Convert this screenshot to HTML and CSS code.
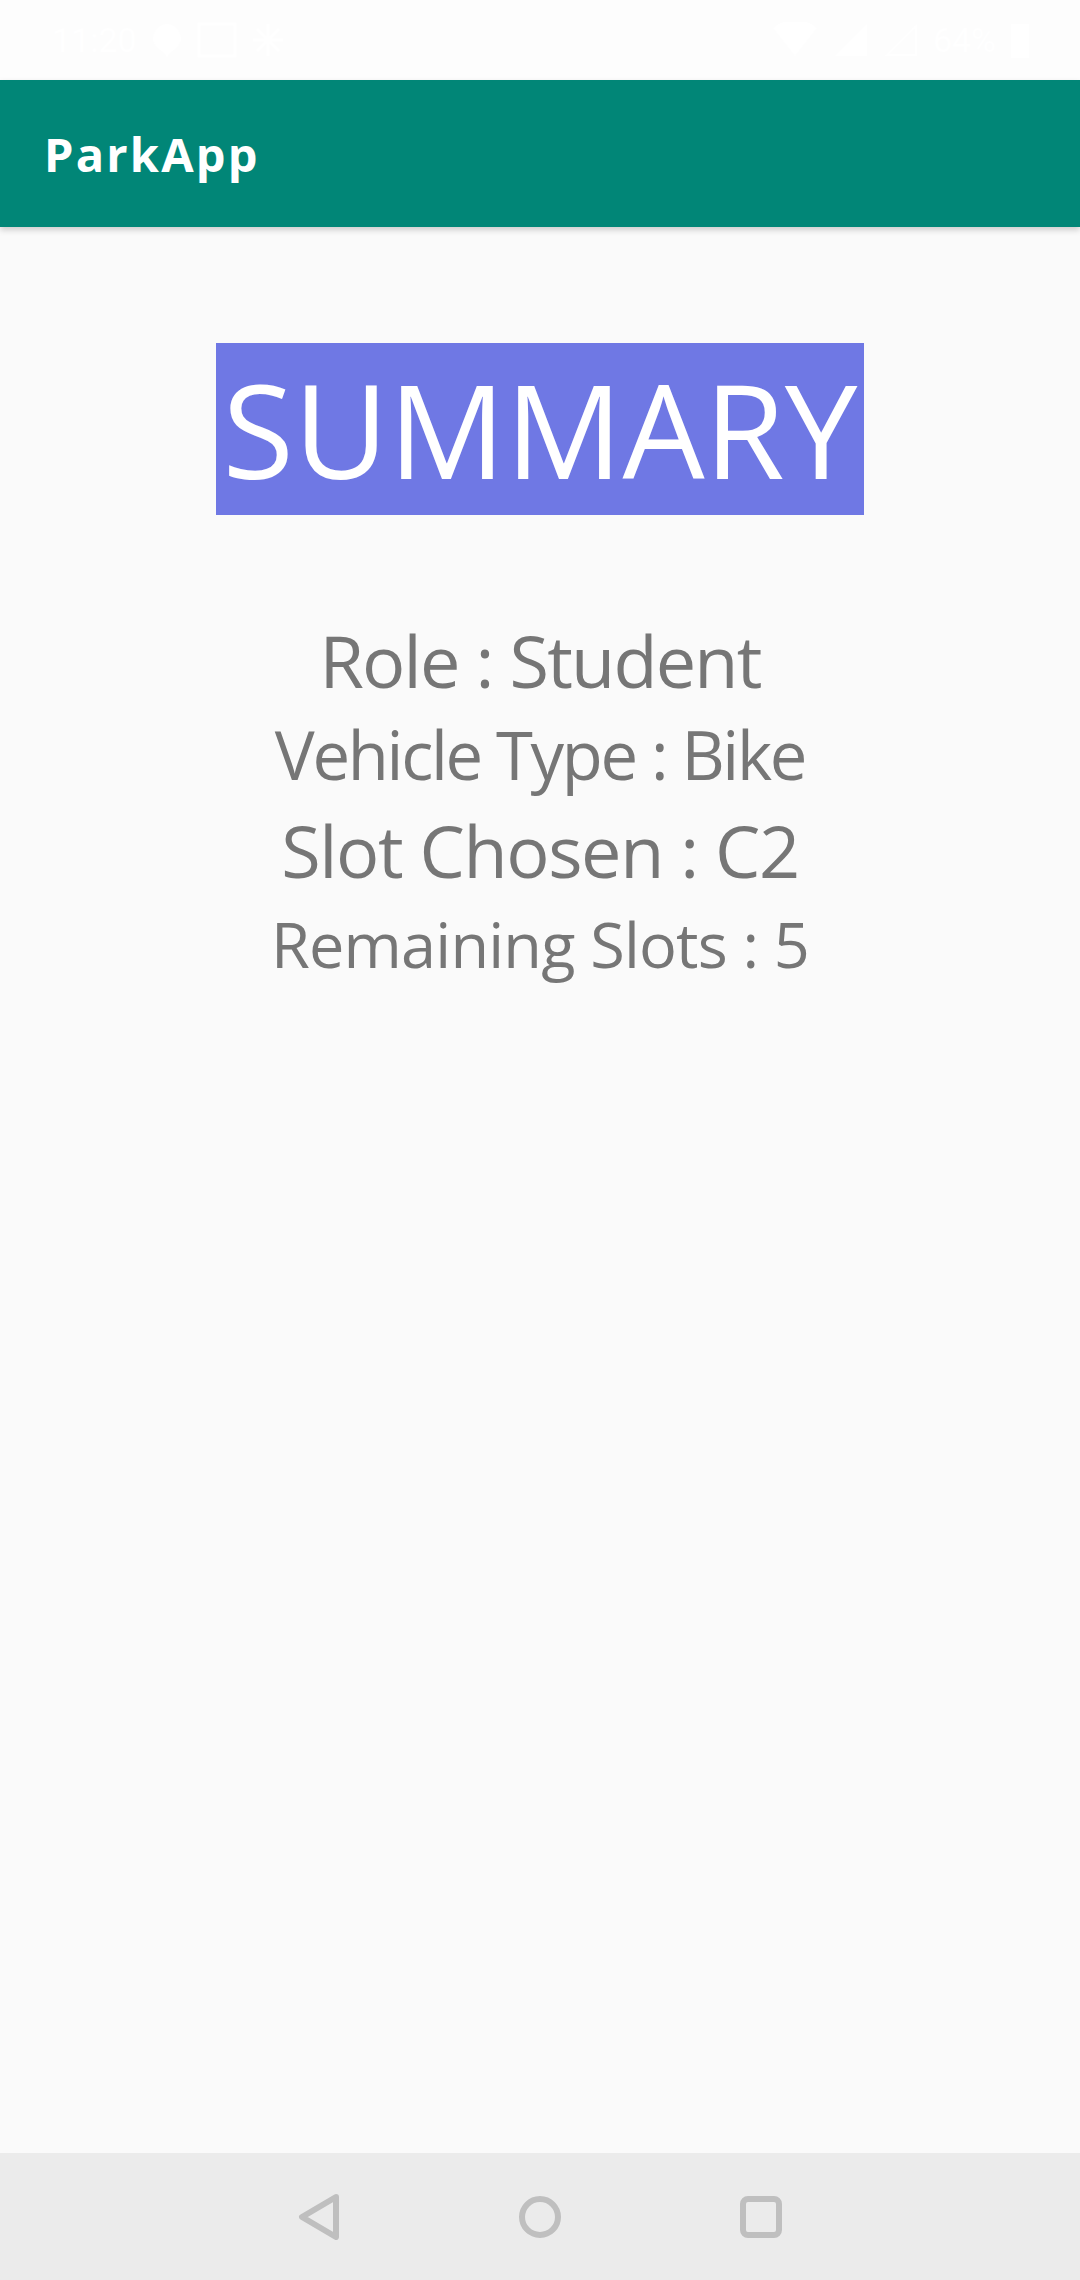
FILE: index.html
```html
<!DOCTYPE html>
<html>
<head>
<meta charset="utf-8">
<link rel="stylesheet" href="styles.css">
</head>
<body>
<div class="screen">
  <div class="statusbar">
    <div class="sb-left">
      <span class="sb-time">11:20</span>
      <svg class="sb-icon" width="32" height="36" viewBox="0 0 32 36"><path d="M16 2a14 14 0 0 0-6 26.6L16 35l6-6.4A14 14 0 0 0 16 2z" fill="#fff"/></svg>
      <svg class="sb-icon" width="40" height="36" viewBox="0 0 40 36"><rect x="2" y="2" width="36" height="32" fill="none" stroke="#fff" stroke-width="3"/></svg>
      <svg class="sb-icon" width="34" height="36" viewBox="0 0 34 36"><g stroke="#fff" stroke-width="3"><line x1="17" y1="2" x2="17" y2="34"/><line x1="2" y1="18" x2="32" y2="18"/><line x1="6" y1="7" x2="28" y2="29"/><line x1="28" y1="7" x2="6" y2="29"/></g></svg>
    </div>
    <div class="sb-right">
      <svg class="sb-icon" width="48" height="36" viewBox="0 0 48 36"><path d="M2 6a34 34 0 0 1 44 0L24 34z" fill="#fff"/></svg>
      <svg class="sb-icon" width="36" height="36" viewBox="0 0 36 36"><path d="M34 2V34H2z" fill="#fff"/></svg>
      <svg class="sb-icon" width="36" height="36" viewBox="0 0 36 36"><path d="M33 4V33H4z" fill="none" stroke="#fff" stroke-width="2"/></svg>
      <span class="sb-batt-text">64%</span>
      <svg class="sb-icon" width="20" height="36" viewBox="0 0 20 36"><rect x="1" y="2" width="18" height="34" fill="#fff"/></svg>
    </div>
  </div>
  <header class="appbar">
    <h1 class="appbar-title">ParkApp</h1>
  </header>
  <main class="content">
    <div class="summary">SUMMARY</div>
    <div class="details">
      <p class="line l-role">Role : Student</p>
      <p class="line l-vehicle">Vehicle Type : Bike</p>
      <p class="line l-slot">Slot Chosen : C2</p>
      <p class="line l-remaining">Remaining Slots : 5</p>
    </div>
  </main>
  <nav class="navbar">
    <svg class="nav-icon" width="46" height="46" viewBox="0 0 46 46"><path d="M40 3 L6 23 L40 43 Z" fill="none" stroke="#bfbfbf" stroke-width="6" stroke-linejoin="round"/></svg>
    <svg class="nav-icon" width="46" height="46" viewBox="0 0 46 46"><circle cx="23" cy="23" r="18" fill="none" stroke="#bfbfbf" stroke-width="6"/></svg>
    <svg class="nav-icon" width="46" height="46" viewBox="0 0 46 46"><rect x="5" y="5" width="36" height="36" rx="5" fill="none" stroke="#bfbfbf" stroke-width="6"/></svg>
  </nav>
</div>
</body>
</html>
```
FILE: styles.css
```css
* { box-sizing: border-box; }
html, body { margin: 0; padding: 0; }
body {
  width: 1080px;
  height: 2280px;
  font-family: "Open Sans", "Noto Sans", sans-serif;
  background: #fafafa;
}
.screen {
  width: 1080px;
  height: 2280px;
  display: flex;
  flex-direction: column;
}
.statusbar {
  height: 80px;
  background: #fdfdfd;
  display: flex;
  justify-content: space-between;
  align-items: center;
  padding: 0 50px 0 52px;
  color: #fff;
}
.sb-left, .sb-right { display: flex; align-items: center; gap: 14px; }
.sb-time { font-size: 34px; font-family: "Roboto", sans-serif; }
.sb-batt-text { font-size: 34px; font-family: "Roboto", sans-serif; }
.appbar {
  height: 147px;
  background: #018677;
  display: flex;
  align-items: center;
  padding-left: 44px;
  box-shadow: 0 3px 6px rgba(0,0,0,0.18);
  position: relative;
  z-index: 1;
}
.appbar-title {
  margin: 0;
  color: #fff;
  font-size: 47px;
  font-weight: 700;
  font-family: "Open Sans", sans-serif;
  letter-spacing: 2.2px;
}
.content {
  flex: 1;
  display: flex;
  flex-direction: column;
  align-items: center;
  padding-top: 116px;
}
.summary {
  width: 648px;
  height: 172px;
  background: #6f78e4;
  color: #fff;
  font-size: 130px;
  line-height: 172px;
  text-align: center;
  white-space: nowrap;
}
.details {
  margin-top: 100px;
  display: flex;
  flex-direction: column;
  align-items: center;
}
.line {
  margin: 0;
  color: #767676;
  white-space: nowrap;
}
.l-role { font-size: 72px; line-height: 91px; letter-spacing: -1.8px; }
.l-vehicle { font-size: 67px; line-height: 96px; letter-spacing: -2.3px; }
.l-slot { font-size: 72px; line-height: 96px; letter-spacing: -1.4px; }
.l-remaining { font-size: 63px; line-height: 92px; letter-spacing: -0.8px; }
.navbar {
  height: 127px;
  background: #ebebeb;
  display: flex;
  align-items: center;
  justify-content: center;
  gap: 175px;
}
.nav-icon { display: block; }
```
